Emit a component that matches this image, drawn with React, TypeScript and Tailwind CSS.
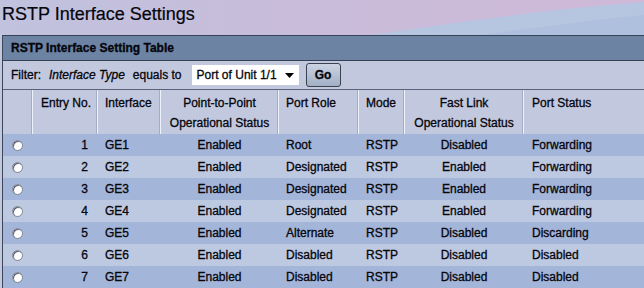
const rows: [number, string, string, string, string, string, string][] = [
  [1, "GE1", "Enabled", "Root", "RSTP", "Disabled", "Forwarding"],
  [2, "GE2", "Enabled", "Designated", "RSTP", "Enabled", "Forwarding"],
  [3, "GE3", "Enabled", "Designated", "RSTP", "Enabled", "Forwarding"],
  [4, "GE4", "Enabled", "Designated", "RSTP", "Enabled", "Forwarding"],
  [5, "GE5", "Enabled", "Alternate", "RSTP", "Disabled", "Discarding"],
  [6, "GE6", "Enabled", "Disabled", "RSTP", "Disabled", "Disabled"],
  [7, "GE7", "Enabled", "Disabled", "RSTP", "Disabled", "Disabled"],
];

function Radio() {
  return (
    <span className="block w-[11px] h-[11px] rounded-full bg-white border border-[#7f8594] shadow-[inset_1px_1px_0_#5f636e]" />
  );
}

export default function App() {
  return (
    <div className="w-[644px] h-[288px] overflow-hidden bg-[#c2c9df] text-[#05050c] text-[12px] font-['Liberation_Sans',Arial,sans-serif] [-webkit-text-stroke:0.3px_#05050c]">
      {/* page heading over the decorative banner */}
      <div className="relative h-[35px] bg-gradient-to-r from-[#c0c2de] via-[#c9bcda] to-[#cfb8d8]">
        <svg className="absolute inset-0" width="644" height="35" viewBox="0 0 644 35">
          <path d="M370 35 C 450 24, 545 9, 644 2 L644 35 Z" fill="#b6c5e0" />
          <path d="M480 35 C 545 27, 600 19, 644 15 L644 35 Z" fill="#a9bcdc" opacity="0.6" />
        </svg>
        <h1 className="relative pl-[2px] pt-[4px] text-[18px] leading-[20px] font-normal [-webkit-text-stroke:0.2px_#05050c]">
          RSTP Interface Settings
        </h1>
      </div>

      <div className="ml-[2px] w-[680px] border-l border-[#3c485a]">
        {/* table caption band */}
        <div className="h-[26px] border-y border-[#364357] bg-[#6c83a3] flex items-center pl-[8px] font-bold">
          RSTP Interface Setting Table
        </div>

        {/* filter bar */}
        <div className="h-[29px] border-b border-[#58627a] flex items-center pl-[8px]">
          <span>Filter:</span>
          <span className="ml-[8px] italic">Interface Type</span>
          <span className="ml-[8px]">equals to</span>
          <div className="ml-[10px] w-[107px] h-[20px] bg-white flex items-center pl-[5px] pr-[5px] justify-between">
            <span>Port of Unit 1/1</span>
            <svg width="9" height="5" viewBox="0 0 9 5">
              <path d="M0 0 L9 0 L4.5 5 Z" fill="#000" />
            </svg>
          </div>
          <button className="ml-[7px] w-[35px] h-[24px] rounded-[3px] border border-[#3a424e] bg-gradient-to-b from-[#ccd4e2] to-[#a2afc6] font-bold text-[12px] flex items-center justify-center">
            Go
          </button>
        </div>

        {/* column headings */}
        <div className="h-[44px] flex leading-[20px]">
          <div className="w-[29px]" />
          <div className="w-[65px] border-l border-[#eef2fa] shadow-[-1px_0_0_#a3aec6] pl-[8px] pt-[3px]">Entry No.</div>
          <div className="w-[63px] border-l border-[#eef2fa] shadow-[-1px_0_0_#a3aec6] pl-[7px] pt-[3px]">Interface</div>
          <div className="w-[118px] border-l border-[#eef2fa] shadow-[-1px_0_0_#a3aec6] text-center pt-[3px]">
            <div>Point-to-Point</div>
            <div>Operational Status</div>
          </div>
          <div className="w-[80px] border-l border-[#eef2fa] shadow-[-1px_0_0_#a3aec6] pl-[7px] pt-[3px]">Port Role</div>
          <div className="w-[46px] border-l border-[#eef2fa] shadow-[-1px_0_0_#a3aec6] pl-[7px] pt-[3px]">Mode</div>
          <div className="w-[119px] border-l border-[#eef2fa] shadow-[-1px_0_0_#a3aec6] text-center pt-[3px]">
            <div>Fast Link</div>
            <div>Operational Status</div>
          </div>
          <div className="flex-1 border-l border-[#eef2fa] shadow-[-1px_0_0_#a3aec6] pl-[8px] pt-[3px]">Port Status</div>
        </div>

        {/* data rows */}
        {rows.map((r) => (
          <div
            key={r[0]}
            className={`h-[22px] flex items-center ${r[0] % 2 === 1 ? "bg-[#a3b5d8]" : "bg-[#bdc9e1]"}`}
          >
            <div className="w-[29px] flex justify-center">
              <Radio />
            </div>
            <div className="w-[65px] border-l border-transparent text-right pr-[9px]">{r[0]}</div>
            <div className="w-[63px] border-l border-transparent pl-[7px]">{r[1]}</div>
            <div className="w-[118px] border-l border-transparent text-center">{r[2]}</div>
            <div className="w-[80px] border-l border-transparent pl-[7px]">{r[3]}</div>
            <div className="w-[46px] border-l border-transparent pl-[7px]">{r[4]}</div>
            <div className="w-[119px] border-l border-transparent text-center">{r[5]}</div>
            <div className="flex-1 border-l border-transparent pl-[8px]">{r[6]}</div>
          </div>
        ))}
      </div>
    </div>
  );
}
